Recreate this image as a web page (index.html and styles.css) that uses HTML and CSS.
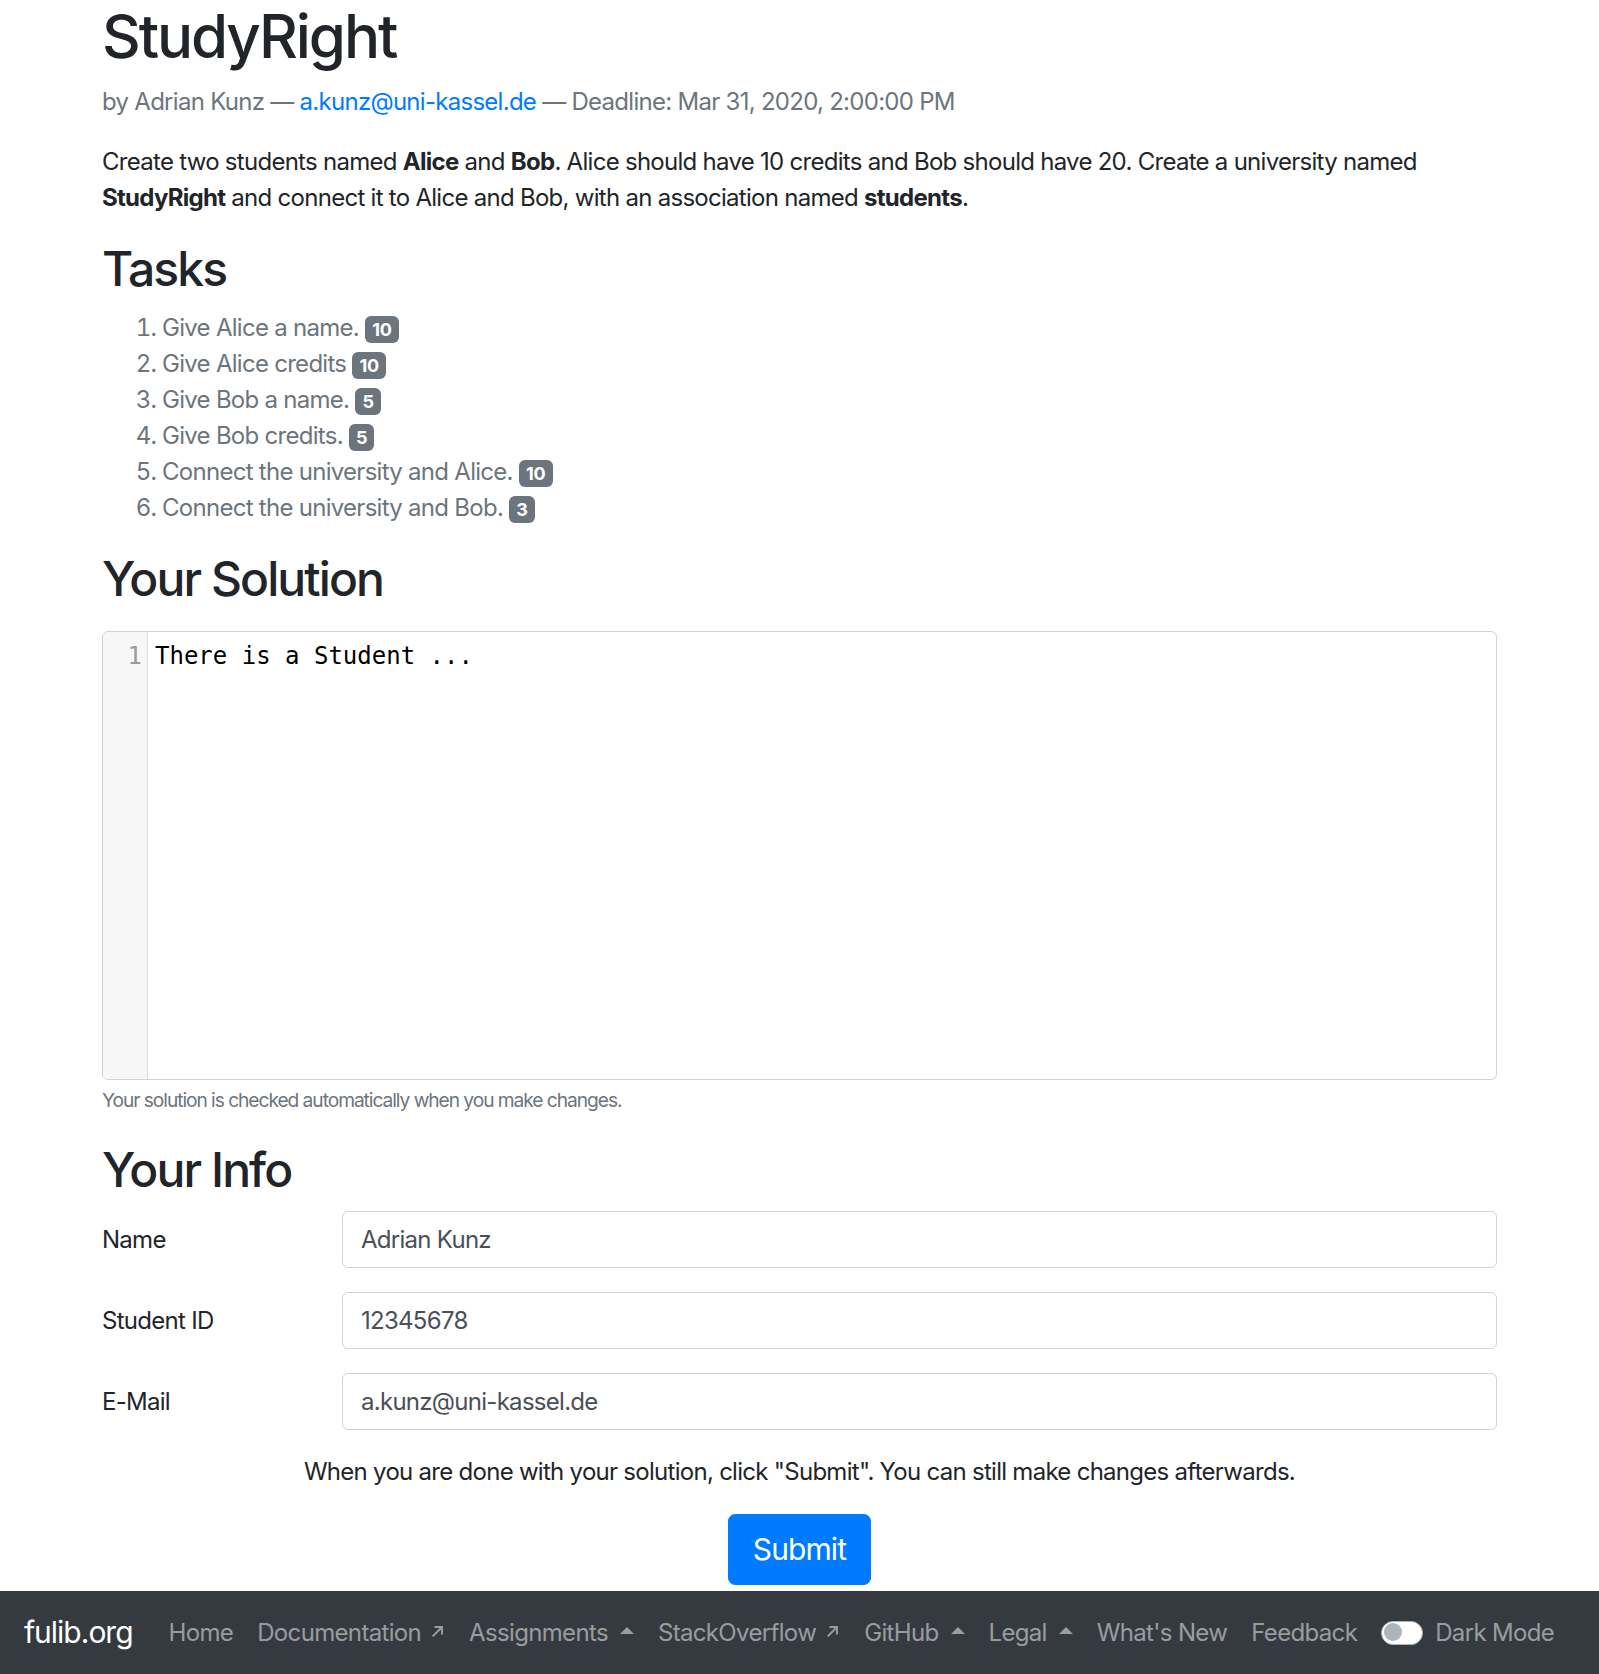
FILE: index.html
```html
<!DOCTYPE html>
<html lang="en">
<head>
<meta charset="utf-8">
<title>StudyRight</title>
<link rel="stylesheet" href="styles.css">
</head>
<body>
<main class="container">
  <h1 class="title">StudyRight</h1>
  <p class="meta">by Adrian Kunz — <a class="link" href="#">a.kunz@uni-kassel.de</a> — Deadline: Mar 31, 2020, 2:00:00 PM</p>
  <p class="desc">Create two students named <b>Alice</b> and <b>Bob</b>. Alice should have 10 credits and Bob should have 20. Create a university named <b>StudyRight</b> and connect it to Alice and Bob, with an association named <b>students</b>.</p>

  <h2 class="heading">Tasks</h2>
  <ol class="tasks">
    <li>Give Alice a name. <span class="badge">10</span></li>
    <li>Give Alice credits <span class="badge">10</span></li>
    <li>Give Bob a name. <span class="badge">5</span></li>
    <li>Give Bob credits. <span class="badge">5</span></li>
    <li>Connect the university and Alice. <span class="badge">10</span></li>
    <li>Connect the university and Bob. <span class="badge">3</span></li>
  </ol>

  <h2 class="heading">Your Solution</h2>
  <div class="editor">
    <div class="gutter"><div class="ln">1</div></div>
    <div class="code"><div class="code-line">There is a Student ...</div></div>
  </div>
  <small class="help">Your solution is checked automatically when you make changes.</small>

  <h2 class="heading info-heading">Your Info</h2>
  <div class="form-row">
    <label class="form-label" for="name">Name</label>
    <input class="form-control" id="name" type="text" value="Adrian Kunz">
  </div>
  <div class="form-row">
    <label class="form-label" for="sid">Student ID</label>
    <input class="form-control" id="sid" type="text" value="12345678">
  </div>
  <div class="form-row">
    <label class="form-label" for="mail">E-Mail</label>
    <input class="form-control" id="mail" type="text" value="a.kunz@uni-kassel.de">
  </div>

  <p class="done">When you are done with your solution, click "Submit". You can still make changes afterwards.</p>
  <div class="submit-wrap"><button class="btn-submit" type="button">Submit</button></div>
</main>

<nav class="navbar">
  <a class="brand" href="#">fulib.org</a>
  <a class="nav-link" href="#">Home</a>
  <a class="nav-link" href="#">Documentation<svg class="ext" viewBox="0 0 14 14" width="15" height="15"><path d="M2.5 11.5 L11 3 M4.2 2.8 H11.2 V9.8" fill="none" stroke="currentColor" stroke-width="1.8"/></svg></a>
  <a class="nav-link" href="#">Assignments<span class="caret"></span></a>
  <a class="nav-link" href="#">StackOverflow<svg class="ext" viewBox="0 0 14 14" width="15" height="15"><path d="M2.5 11.5 L11 3 M4.2 2.8 H11.2 V9.8" fill="none" stroke="currentColor" stroke-width="1.8"/></svg></a>
  <a class="nav-link" href="#">GitHub<span class="caret"></span></a>
  <a class="nav-link" href="#">Legal<span class="caret"></span></a>
  <a class="nav-link" href="#">What's New</a>
  <a class="nav-link" href="#">Feedback</a>
  <div class="switch"><span class="track"><span class="knob"></span></span><span class="switch-label">Dark Mode</span></div>
</nav>
</body>
</html>
```

FILE: styles.css
```css
* { box-sizing: border-box; }
html, body { margin: 0; padding: 0; }
body {
  font-family: Inter, "Noto Sans", "Liberation Sans", sans-serif;
  font-size: 24px;
  line-height: 1.5;
  letter-spacing: -0.72px;
  color: #212529;
  background: #fff;
}
.container {
  width: 1395px;
  margin: 0 0 0 102px;
}
.title {
  font-size: 60px;
  font-weight: 500;
  line-height: 1.2;
  letter-spacing: -2.1px;
  margin: 0 0 12px;
}
.meta {
  margin: 0 0 24px;
  color: #6c757d;
}
.link { color: #007bff; text-decoration: none; }
.desc { margin: 0 0 24px; }
.desc b { font-weight: 700; }
.heading {
  font-size: 48px;
  font-weight: 500;
  line-height: 1.2;
  letter-spacing: -1.9px;
  margin: 0 0 12px;
}
.tasks {
  margin: 0 0 24px;
  padding-left: 60px;
  color: #6c757d;
}
.badge {
  display: inline-block;
  font-size: 18px;
  font-weight: 700;
  line-height: 1;
  letter-spacing: -0.3px;
  padding: 4.5px 7.2px;
  border-radius: 6px;
  background: #6c757d;
  color: #fff;
  vertical-align: baseline;
}
.editor {
  margin-top: 24px;
  height: 449px;
  border: 1px solid #ced4da;
  border-radius: 6px;
  display: flex;
  overflow: hidden;
}
.gutter {
  width: 45px;
  background: #f7f7f7;
  border-right: 1px solid #ddd;
  padding-top: 7px;
}
.ln {
  font-family: "DejaVu Sans Mono", monospace;
  font-size: 24px;
  line-height: 34px;
  letter-spacing: 0;
  color: #999;
  text-align: right;
  padding-right: 5px;
}
.code { flex: 1; padding-top: 7px; }
.code-line {
  font-family: "DejaVu Sans Mono", monospace;
  font-size: 24px;
  line-height: 34px;
  letter-spacing: 0;
  color: #000;
  padding-left: 7px;
  white-space: pre;
}
.help {
  display: block;
  margin-top: 6px;
  font-size: 19.2px;
  line-height: 1.5;
  color: #6c757d;
  letter-spacing: -1.05px;
}
.info-heading { margin-top: 26px; }
.form-row {
  display: flex;
  align-items: center;
  margin-bottom: 24px;
}
.form-label {
  width: 240px;
  flex: none;
  padding-top: 2px;
}
.form-control {
  flex: 1;
  height: 57px;
  padding: 9px 18px;
  font: inherit;
  font-size: 24px;
  letter-spacing: inherit;
  color: #495057;
  border: 1px solid #ced4da;
  border-radius: 6px;
  background: #fff;
}
.done {
  text-align: center;
  margin: 0 0 24px;
}
.submit-wrap {
  display: flex;
  justify-content: center;
  margin-bottom: 6px;
}
.btn-submit {
  font: inherit;
  font-size: 30px;
  line-height: 1.5;
  letter-spacing: -0.9px;
  padding: 12px 24px;
  border: 1px solid #007bff;
  border-radius: 7.2px;
  background: #007bff;
  color: #fff;
}
.navbar {
  display: flex;
  align-items: center;
  height: 84px;
  padding: 12px 24px;
  background: #343a40;
  white-space: nowrap;
  letter-spacing: -0.66px;
}
.brand {
  font-size: 30px;
  line-height: 45px;
  letter-spacing: -1px;
  color: #fff;
  text-decoration: none;
  margin-right: 24px;
}
.nav-link {
  display: flex;
  align-items: center;
  padding: 12px;
  color: rgba(255,255,255,.5);
  text-decoration: none;
  line-height: 36px;
}
.ext { margin-left: 9px; margin-bottom: 3px; }
.caret {
  display: inline-block;
  margin-left: 12px;
  width: 0;
  height: 0;
  border-left: 7.2px solid transparent;
  border-right: 7.2px solid transparent;
  border-bottom: 7.2px solid currentColor;
  margin-bottom: 4px;
}
.switch {
  display: flex;
  align-items: center;
  margin-left: 12px;
}
.track {
  position: relative;
  width: 42px;
  height: 24px;
  border: 1.5px solid #adb5bd;
  border-radius: 12px;
  background: #fff;
  margin-right: 12px;
}
.knob {
  position: absolute;
  left: 2px;
  top: 1.5px;
  width: 18px;
  height: 18px;
  border-radius: 50%;
  background: #adb5bd;
}
.switch-label { color: rgba(255,255,255,.5); }
```
